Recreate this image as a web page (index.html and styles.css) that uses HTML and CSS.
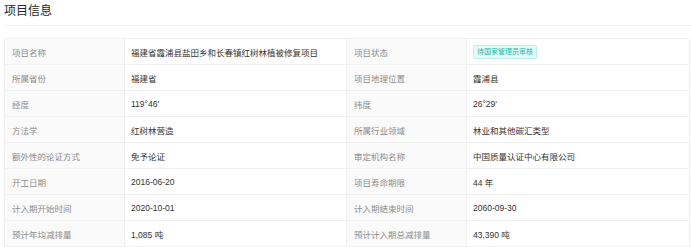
FILE: index.html
```html
<!DOCTYPE html>
<html lang="zh">
<head>
<meta charset="utf-8">
<link rel="stylesheet" href="styles.css">
</head>
<body>
<div class="page">
  <div class="title">项目信息</div>
  <div class="divider"></div>
  <div class="table">
    <div class="lab">项目名称</div><div class="val">福建省霞浦县盐田乡和长春镇红树林植被修复项目</div>
    <div class="lab">项目状态</div><div class="val"><span class="tag">待国家管理员审核</span></div>
    <div class="lab">所属省份</div><div class="val">福建省</div>
    <div class="lab">项目地理位置</div><div class="val">霞浦县</div>
    <div class="lab">经度</div><div class="val">119°46′</div>
    <div class="lab">纬度</div><div class="val">26°29′</div>
    <div class="lab">方法学</div><div class="val">红树林营造</div>
    <div class="lab">所属行业领域</div><div class="val">林业和其他碳汇类型</div>
    <div class="lab">额外性的论证方式</div><div class="val">免予论证</div>
    <div class="lab">审定机构名称</div><div class="val">中国质量认证中心有限公司</div>
    <div class="lab">开工日期</div><div class="val">2016-06-20</div>
    <div class="lab">项目寿命期限</div><div class="val">44 年</div>
    <div class="lab">计入期开始时间</div><div class="val">2020-10-01</div>
    <div class="lab">计入期结束时间</div><div class="val">2060-09-30</div>
    <div class="lab">预计年均减排量</div><div class="val">1,085 吨</div>
    <div class="lab">预计计入期总减排量</div><div class="val">43,390 吨</div>
  </div>
</div>
</body>
</html>
```
FILE: styles.css
```css
html, body {
  margin: 0;
  padding: 0;
  background: #fff;
}
.page {
  padding: 0 2px 0 4px;
  font-family: "Liberation Sans", "Noto Sans CJK SC", sans-serif;
}
.title {
  font-size: 12px;
  line-height: 18px;
  color: #262626;
  padding-top: 1px;
  font-family: "Noto Sans CJK SC", sans-serif;
}
.divider {
  height: 1px;
  background: #f2f2f2;
  margin: 6px -4px 12px 0;
}
.table {
  display: grid;
  grid-template-columns: 120px 222px 120px 223px;
  border-top: 1px solid #f0f0f0;
  border-left: 1px solid #f0f0f0;
  font-size: 8.5px;
}
.lab, .val {
  height: 25px;
  display: flex;
  align-items: center;
  border-right: 1px solid #f0f0f0;
  border-bottom: 1px solid #f0f0f0;
  box-sizing: content-box;
  min-width: 0;
}
.lab {
  background: #fafafa;
  color: #8c8c8c;
  padding-left: 7px;
}
.val {
  color: #333;
  padding-left: 6px;
}
.tag {
  display: inline-block;
  font-size: 7px;
  line-height: 12px;
  padding: 0 3px;
  color: #22b8aa;
  background: #e6fbf7;
  border: 1px solid #bfeee7;
  border-radius: 2px;
}
```
